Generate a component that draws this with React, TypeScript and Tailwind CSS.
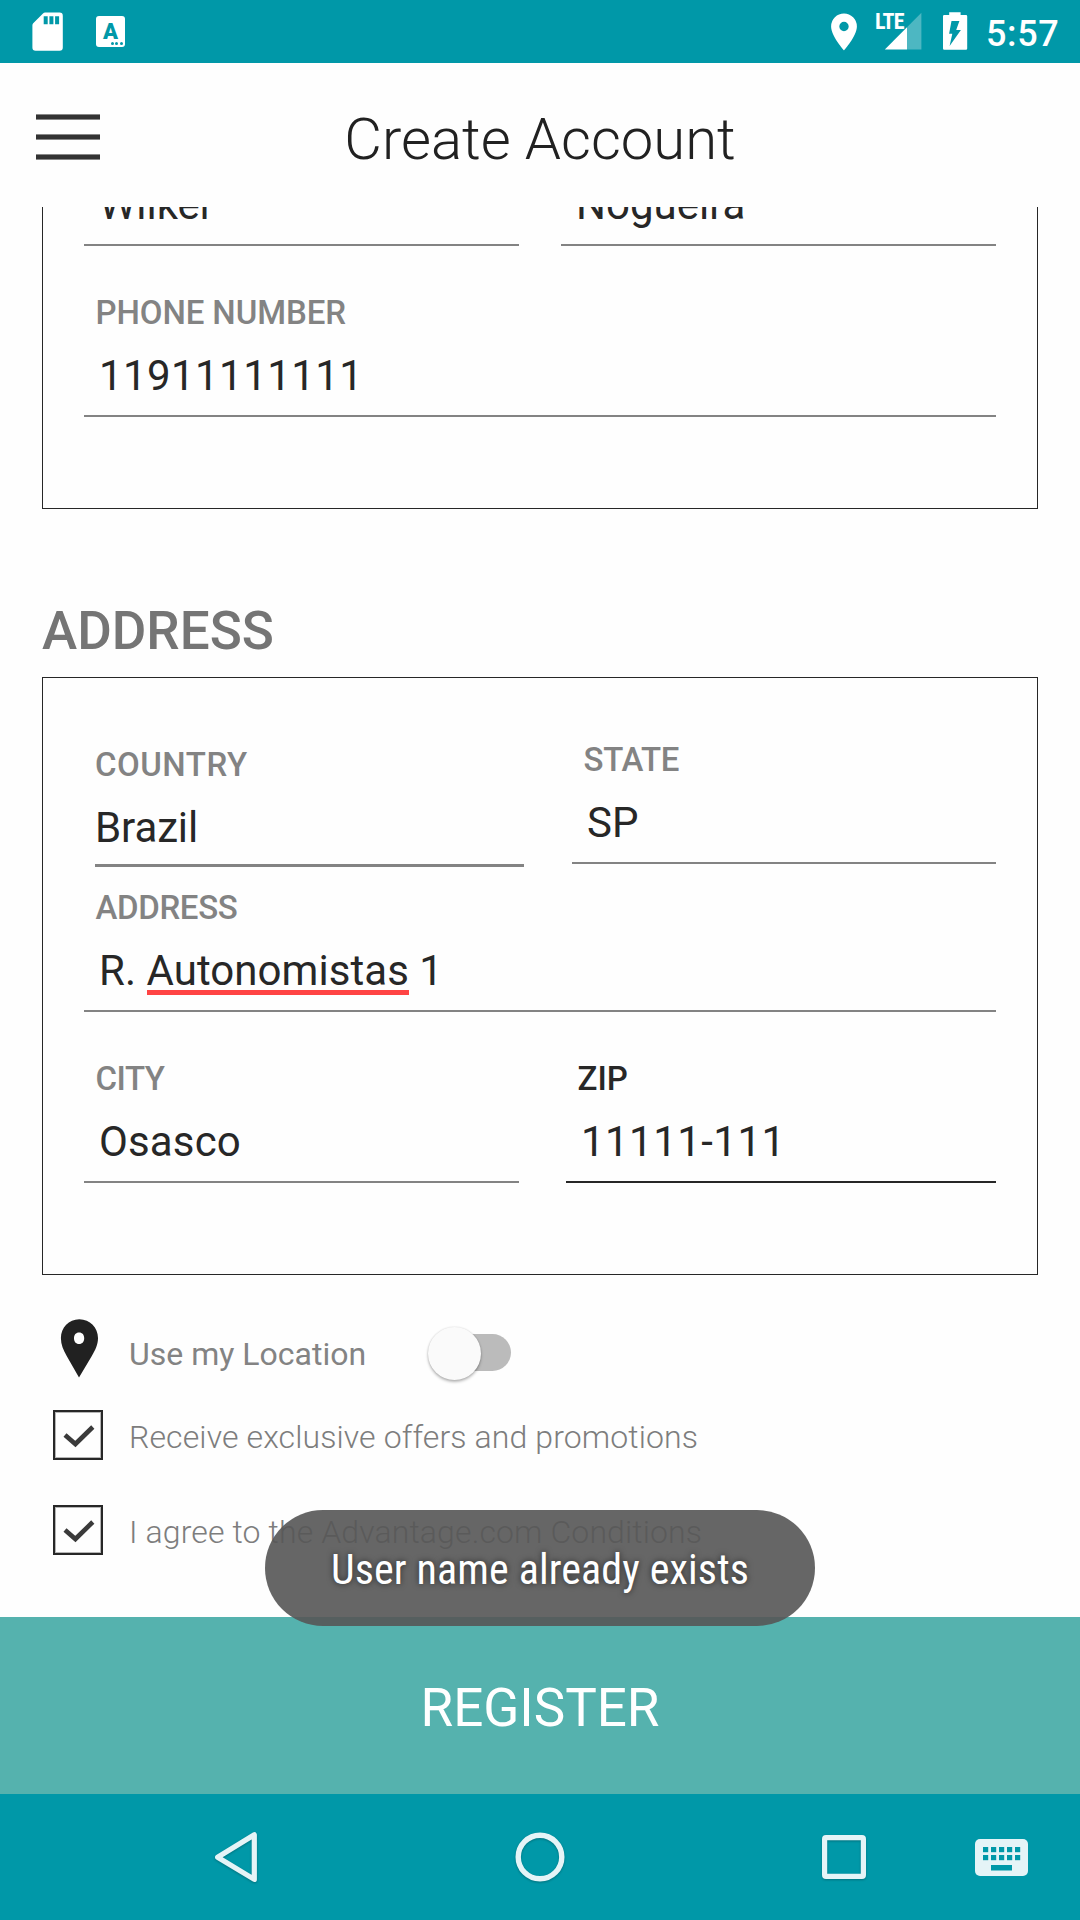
import type { ReactNode } from 'react';

type FieldProps = {
  label?: string;
  value: ReactNode;
  className?: string;
  labelClass?: string;
  valueClass?: string;
  active?: boolean;
};

function Field({ label, value, className = '', labelClass = '', valueClass = '', active = false }: FieldProps) {
  return (
    <div className={`flex flex-col ${className}`}>
      {label && (
        <div
          className={`mb-[19px] h-10 pl-[11.5px] text-[33px] leading-10 font-medium whitespace-nowrap ${active ? 'text-[#272727]' : 'text-[#838383]'} ${labelClass}`}
        >
          {label}
        </div>
      )}
      <div className={`h-12 pl-[15px] text-[42px] leading-[48px] whitespace-nowrap text-[#272727] ${valueClass}`}>{value}</div>
      <div className={`mt-[15px] h-[2px] ${active ? 'bg-[#272727]' : 'bg-[#838383]'}`} />
    </div>
  );
}

function StatusBar() {
  return (
    <div className="flex h-[63px] shrink-0 items-start justify-between bg-[#0098a8] text-white">
      <div className="flex items-start pl-8">
        <svg className="mt-3 h-[39px] w-8" viewBox="32 12 32 39">
          <path
            fill="#fff"
            fillRule="evenodd"
            d="M45.2 12.5H59.6a3.2 3.2 0 0 1 3.2 3.2V47.6a3.2 3.2 0 0 1-3.2 3.2H35.6a3.2 3.2 0 0 1-3.2-3.2V25.2a2.8 2.8 0 0 1 .8-2L43 13.4a3 3 0 0 1 2.2-.9ZM43.7 16.2V24.2H47.7V16.2ZM49.4 16.2V24.2H53.4V16.2ZM55.1 16.2V24.2H59.1V16.2Z"
          />
        </svg>
        <div className="mt-4 ml-8 flex h-[31px] w-[29px] flex-col rounded-[3px] bg-white">
          <span className="mt-[5px] h-5 text-center text-[22px] leading-[21px] font-black text-[#0098a8]">A</span>
          <span className="flex justify-end gap-[1.5px] pt-[1px] pr-[2.5px]">
            <i className="size-[2.8px] rounded-full bg-[#0098a8]" />
            <i className="size-[2.8px] rounded-full bg-[#0098a8]" />
            <i className="size-[2.8px] rounded-full bg-[#0098a8]" />
          </span>
        </div>
      </div>
      <div className="flex items-start">
        <svg className="mt-[13px] h-[38px] w-7" viewBox="830 13 28 38">
          <path
            fill="#fff"
            fillRule="evenodd"
            d="M844 13.5a12.9 12.9 0 0 0-12.9 12.9c0 9.5 12.9 23.8 12.9 23.8s12.9-14.3 12.9-23.8a12.9 12.9 0 0 0-12.9-12.9Zm0 17.7a4.7 4.7 0 1 1 0-9.4a4.7 4.7 0 0 1 0 9.4Z"
          />
        </svg>
        <div className="relative ml-[17px] h-[51px] w-[47px]">
          <svg className="h-[51px] w-[47px]" viewBox="875 0 47 51">
            <path fill="#fff" d="M884.8 49.5L907 27.3V49.5Z" />
            <path fill="#fff" fillOpacity=".3" d="M907 27.3L921.4 12.8V49.5H907Z" />
          </svg>
          <span className="absolute top-[11px] left-0 font-['Roboto_Condensed'] text-[22px] leading-[22px] font-bold tracking-[-0.7px]">
            LTE
          </span>
        </div>
        <svg className="mt-3 ml-[21px] h-[38px] w-[25px]" viewBox="943 12 25 38">
          <path
            fill="#fff"
            fillRule="evenodd"
            d="M949.2 12.3H960.6V15.1H966a1.2 1.2 0 0 1 1.2 1.2V48.6a1.2 1.2 0 0 1-1.2 1.2H944.2a1.2 1.2 0 0 1-1.2-1.2V16.3a1.2 1.2 0 0 1 1.2-1.2H949.2ZM951.5 21L949.1 33.7H952.3L949.6 45.9L960.9 30H956.2L959.4 21Z"
          />
        </svg>
        <span className="mt-[13px] ml-[18px] w-[94px] text-[36px] leading-[42px] font-medium tracking-[0.6px]">5:57</span>
      </div>
    </div>
  );
}

function Header() {
  return (
    <header className="grid h-36 shrink-0 grid-cols-[100px_1fr_100px] items-center">
      <div className="flex flex-col gap-[14px] pt-1 pl-9">
        <span className="h-[6px] border-y border-[#888] bg-[#333]" />
        <span className="h-[6px] border-y border-[#888] bg-[#333]" />
        <span className="h-[6px] border-y border-[#888] bg-[#333]" />
      </div>
      <h1 className="pt-2 text-center text-[58px] leading-[68px] font-light text-[#212121]">Create Account</h1>
    </header>
  );
}

function CheckRow({ children, className = '' }: { children: ReactNode; className?: string }) {
  return (
    <div className={`flex h-[50px] items-start pl-[53px] ${className}`}>
      <svg className="size-[50px]" viewBox="0 0 50 50" fill="none">
        <rect x="2.4" y="2.4" width="45.2" height="45.2" stroke="#b5b5b5" strokeWidth="1.2" />
        <rect x="1" y="1" width="48" height="48" stroke="#272727" strokeWidth="2" />
        <path d="M12 24.9L22.4 34L39.8 17" stroke="#3a3a3a" strokeWidth="4.6" />
      </svg>
      <span className="mt-[7px] ml-[26px] text-[32px] leading-10 font-light whitespace-nowrap text-[#7d7d7d]">{children}</span>
    </div>
  );
}

function NavBar() {
  return (
    <nav className="flex h-[126px] shrink-0 items-center bg-[#0098a8]">
      <svg className="ml-[208px] size-14 drop-shadow-[0_1px_1px_rgba(0,0,0,0.25)]" viewBox="208 1829 56 56" fill="none">
        <path d="M217.6 1857.2L254.3 1834.8V1879.4Z" stroke="#e5f4f7" strokeWidth="5.2" strokeLinejoin="round" />
      </svg>
      <svg className="ml-[248px] size-14 drop-shadow-[0_1px_1px_rgba(0,0,0,0.25)]" viewBox="0 0 56 56" fill="none">
        <circle cx="28" cy="28" r="21.8" stroke="#e5f4f7" strokeWidth="5.4" />
      </svg>
      <svg className="ml-[248px] size-14 drop-shadow-[0_1px_1px_rgba(0,0,0,0.25)]" viewBox="0 0 56 56" fill="none">
        <rect x="8.6" y="8.6" width="38.8" height="38.8" rx="1.4" stroke="#e5f4f7" strokeWidth="5.2" />
      </svg>
      <svg className="ml-[103px] h-[37px] w-[53px]" viewBox="0 0 53 37">
        <rect width="53" height="37" rx="5" fill="#e5f4f7" />
        {[8, 16, 24, 32, 40].map((x) => (
          <g key={x} fill="#0098a8">
            <rect x={x} y="8" width="5.2" height="5.2" />
            <rect x={x} y="16" width="5.2" height="5.2" />
          </g>
        ))}
        <rect x="16" y="26" width="21" height="5.5" fill="#0098a8" />
      </svg>
    </nav>
  );
}

export default function App() {
  return (
    <div className="relative flex h-[1920px] w-[1080px] flex-col overflow-hidden bg-[#fefefe] font-[Roboto,sans-serif]">
      <StatusBar />
      <Header />
      <main className="flex h-[1410px] shrink-0 flex-col overflow-hidden">
        <section className="mx-[42px] border-x border-b border-[#272727] px-[41px] pb-[91px]">
          <div className="-mt-[26px] flex justify-between">
            <Field value="Wilker" className="w-[435px]" />
            <Field value="Nogueira" className="w-[435px]" />
          </div>
          <Field
            label="PHONE NUMBER"
            value="11911111111"
            className="mt-[47px]"
            labelClass="tracking-[-0.1px]"
            valueClass="tracking-[0.42px]"
          />
        </section>

        <h2 className="mt-[91px] ml-[42px] h-[62px] text-[53px] leading-[62px] font-medium text-[#757575]">ADDRESS</h2>

        <section className="mx-[42px] mt-[15px] border border-[#272727] px-[41px] pb-[91px]">
          <div className="flex items-start justify-between pt-[62px] pl-[11px]">
            <div className="mt-[5px] flex w-[429px] flex-col">
              <div className="h-10 text-[33px] leading-10 font-medium tracking-[0.5px] text-[#838383]">COUNTRY</div>
              <div className="mt-[19px] h-12 text-[42px] leading-[48px] tracking-[-0.1px] text-[#272727]">Brazil</div>
              <div className="mt-3 h-[3px] bg-[#838383]" />
            </div>
            <Field label="STATE" value="SP" className="w-[424px]" labelClass="tracking-[-0.3px]" />
          </div>
          <Field
            label="ADDRESS"
            className="mt-[21px]"
            labelClass="tracking-[-0.35px]"
            valueClass="tracking-[0.05px]"
            value={
              <>
                R.{' '}
                <span className="relative inline-block">
                  Autonomistas
                  <span className="absolute inset-x-0 bottom-0 h-[5px] bg-[#ff4444]" />
                </span>{' '}
                1
              </>
            }
          />
          <div className="mt-[47px] flex justify-between">
            <Field label="CITY" value="Osasco" className="w-[435px]" labelClass="tracking-[-0.5px]" valueClass="tracking-[0.15px]" />
            <Field label="ZIP" value="11111-111" className="w-[430px]" valueClass="tracking-[0.45px]" active />
          </div>
        </section>

        <div className="mt-10 flex h-20 items-start pl-[59px]">
          <svg className="mt-1 h-[59px] w-10" viewBox="59 1319 40 59">
            <path
              fill="#212121"
              fillRule="evenodd"
              d="M79.3 1319.3C68.8 1319.3 60.9 1327.6 60.9 1338C60.9 1344.5 63.3 1350 66.7 1356L79 1377.6L91.8 1356C95.3 1350 98 1344.5 98 1338C98 1327.6 90 1319.3 79.3 1319.3ZM79.1 1332.4C82.4 1332.4 84.2 1334.8 84.2 1338.2C84.2 1341.6 82.4 1344 79.1 1344C75.8 1344 74 1341.6 74 1338.2C74 1334.8 75.8 1332.4 79.1 1332.4Z"
            />
          </svg>
          <span className="mt-[19px] ml-[30px] w-[299px] text-[32px] leading-10 text-[#838383]">Use my Location</span>
          <div className="relative mt-[19px] h-[37px] w-[83px]">
            <div className="ml-2 h-full rounded-full bg-[#bbb]" />
            <div className="absolute -top-[7px] left-0 size-[53px] rounded-full bg-[#fafafa] shadow-[0_2px_3px_rgba(0,0,0,0.28),0_0_2px_rgba(0,0,0,0.14)]" />
          </div>
        </div>
        <CheckRow className="mt-[15px] tracking-[0.11px]">Receive exclusive offers and promotions</CheckRow>
        <CheckRow className="mt-[45px] tracking-[0.11px]">I agree to the Advantage.com Conditions</CheckRow>
      </main>

      <button className="flex h-[177px] shrink-0 items-center justify-center bg-[#55b2ae] pt-[5px] text-[53px] leading-[62px] tracking-[-0.05px] text-white">
        REGISTER
      </button>
      <NavBar />

      <div className="absolute top-[1510px] left-[265px] flex h-[116px] w-[550px] items-center justify-center rounded-full bg-[rgba(87,87,87,0.91)] pt-1 font-['Roboto_Condensed'] text-[42px] leading-[48px] tracking-[0.14px] whitespace-nowrap text-white [text-shadow:0_0_6px_rgba(0,0,0,0.6)]">
        User name already exists
      </div>
    </div>
  );
}
